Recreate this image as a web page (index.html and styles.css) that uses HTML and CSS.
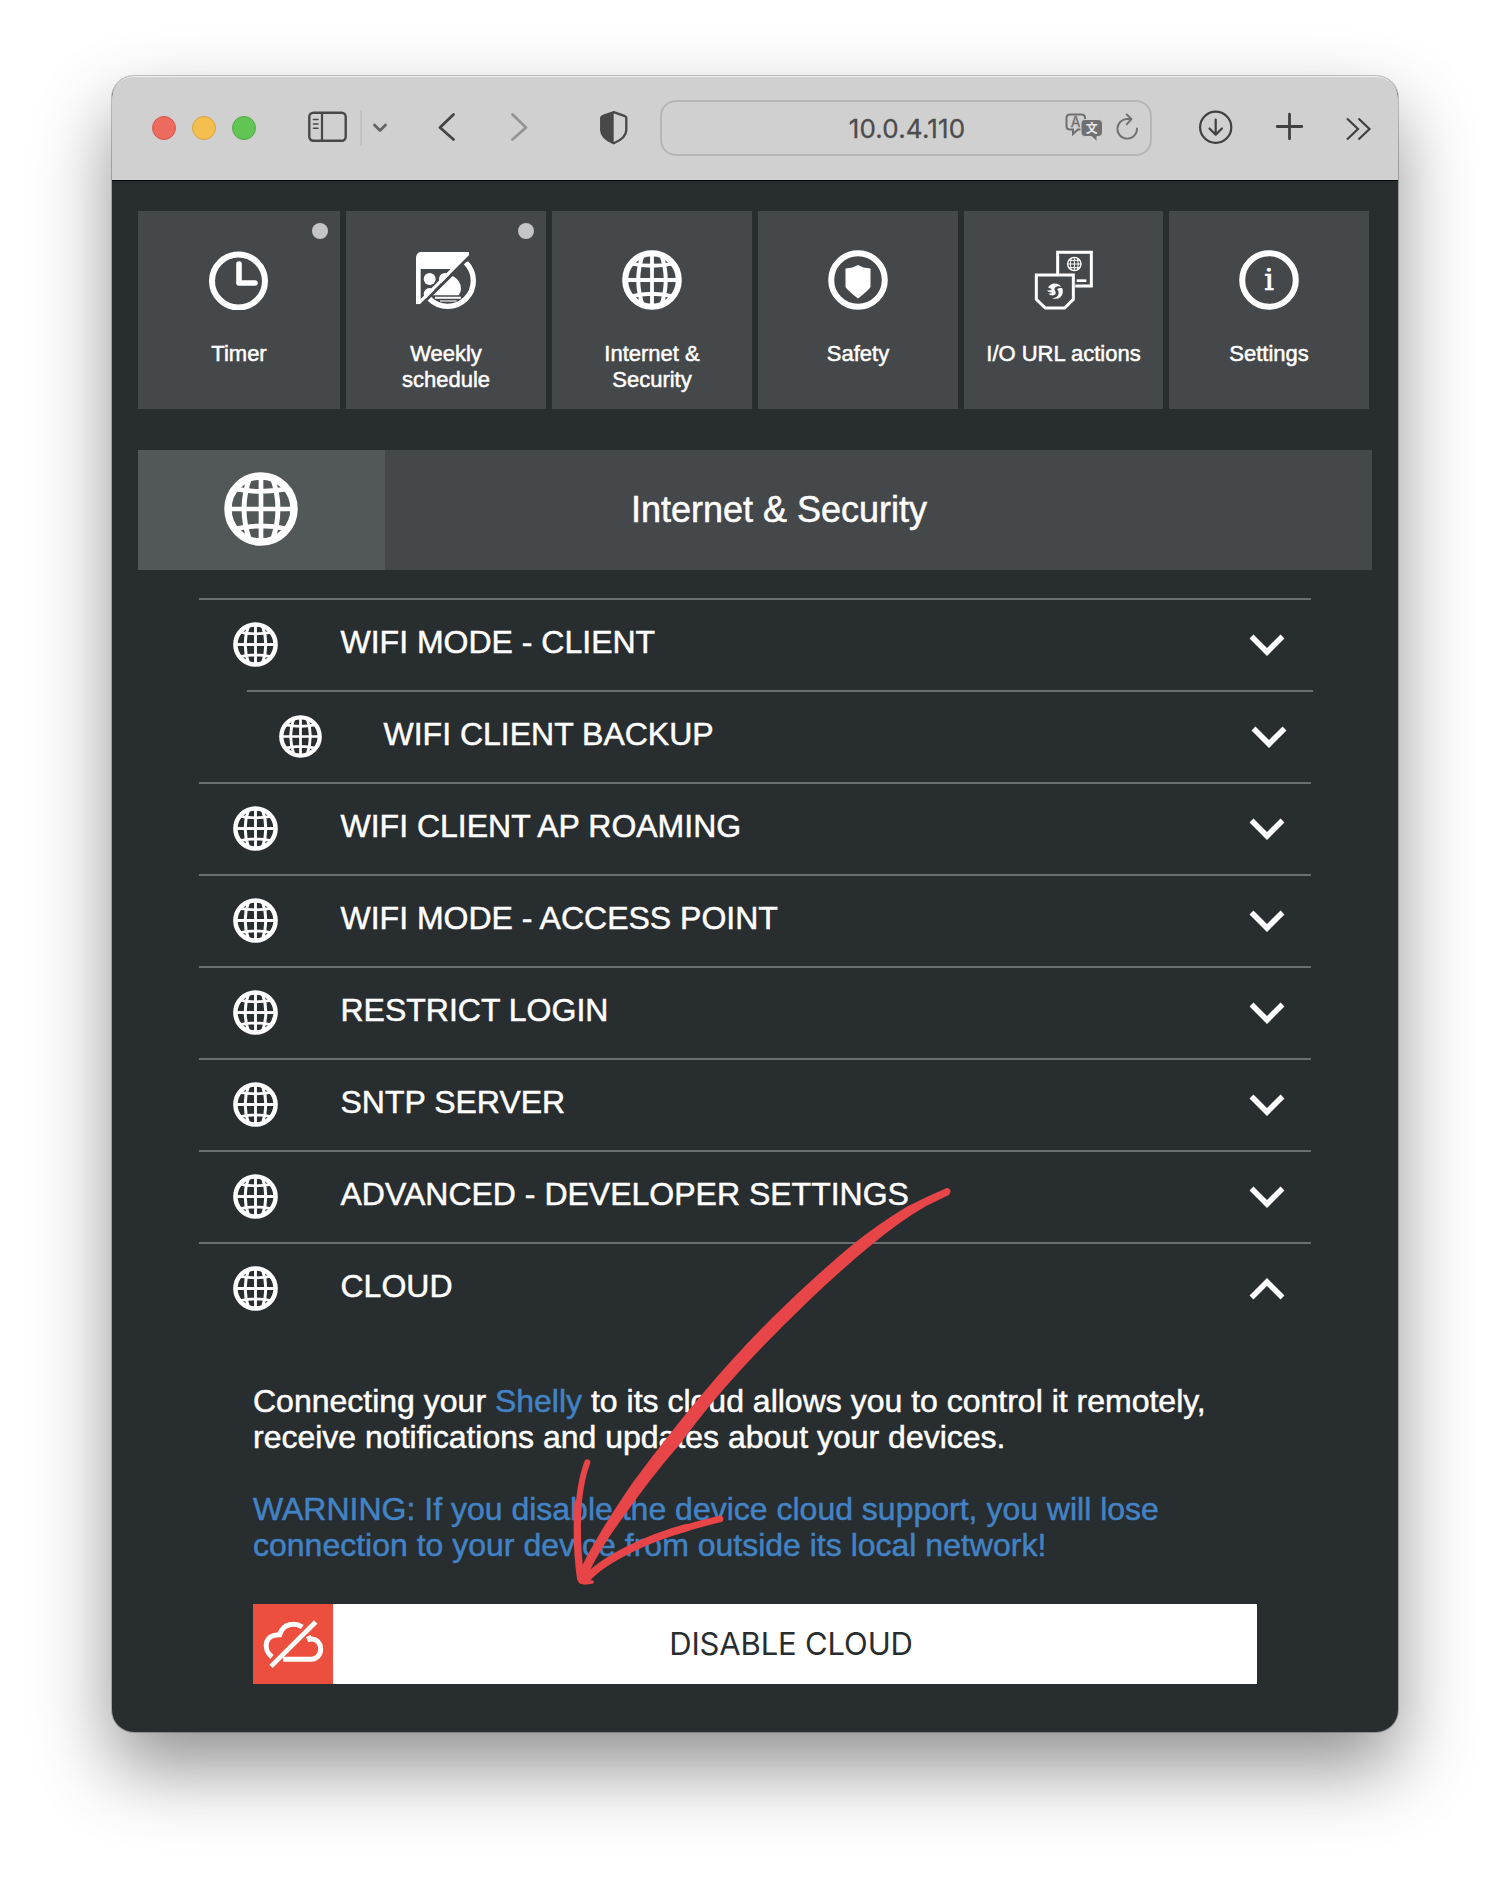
FILE: index.html
```html
<!DOCTYPE html>
<html lang="en">
<head>
<meta charset="utf-8">
<title>Internet &amp; Security</title>
<link rel="stylesheet" href="styles.css">
</head>
<body>
<svg class="defs" width="0" height="0">
  <symbol id="globe" viewBox="0 0 60 60">
    <g fill="none" stroke="#fff">
      <circle cx="30" cy="30" r="26.800" stroke-width="6"/>
      <path d="M30 3V57M3 30H57M8 13.500Q30 18 52 13.500M8 46.500Q30 41 52 46.500" stroke-width="3.800"/>
      <path d="M21 4Q11.500 30 21 56M39 4Q48.500 30 39 56" stroke-width="4"/>
    </g>
  </symbol>
  <symbol id="down" viewBox="0 0 36 22">
    <path d="M2.500 2.500L18 18L33.500 2.500" fill="none" stroke="#fff" stroke-width="5.600"/>
  </symbol>
</svg>
<main class="window">
  <header class="toolbar">
    <div class="lights"><i class="red"></i><i class="amber"></i><i class="green"></i></div>
    <svg class="ic-sidebar" width="40" height="36" fill="none" stroke="#484848">
      <rect x="1.300" y="2.800" width="36.400" height="28" rx="4" stroke-width="2.400"/>
      <path d="M14 3V31" stroke-width="2.200"/>
      <path d="M5.500 9.500H10M5.500 14H10M5.500 18.300H10" stroke-width="1.600" stroke-linecap="round"/>
    </svg>
    <span class="sep"></span>
    <svg class="ic-menu" width="16" height="36" fill="none" stroke="#636368" stroke-width="2.800" stroke-linecap="round" stroke-linejoin="round"><path d="M2.500 15L8 20.500L13.500 15"/></svg>
    <svg class="ic-back" width="18" height="36" fill="none" stroke="#454545" stroke-width="2.800" stroke-linecap="round" stroke-linejoin="round"><path d="M15.500 4.500L2 17.500L15.500 29.500"/></svg>
    <svg class="ic-next" width="18" height="36" fill="none" stroke="#949494" stroke-width="2.800" stroke-linecap="round" stroke-linejoin="round"><path d="M2.500 4.500L16 17.500L2.500 29.500"/></svg>
    <svg class="ic-shield" width="28" height="36"><path d="M13.700 2.200L25 6.200Q26.300 6.700 26.300 8V20Q26.300 28 13.700 33.200Q1.200 28 1.200 20V8Q1.200 6.700 2.500 6.200Z" fill="none" stroke="#484848" stroke-width="2.300"/><path d="M13.700 1.500L1.200 6.500V20Q1.200 28 13.700 33.500Z" fill="#484848"/></svg>
    <div class="address">
      <span class="host">10.0.4.110</span>
      <svg class="ic-translate" width="38" height="36">
        <path d="M5 4.500H16.500Q20 4.500 20 8V16.500Q20 19.500 16.500 19.500H13L8 24V19.500H5Q1.500 19.500 1.500 16V8Q1.500 4.500 5 4.500Z" fill="none" stroke="#707070" stroke-width="2"/>
        <text x="10.700" y="16.500" class="glyph-a">A</text>
        <path d="M20 9.500H33Q37.500 9.500 37.500 14V22Q37.500 26.500 33 26.500H32V31.500L26.500 26.500H20.500Q16 26.500 16 22V14Q16 9.500 20 9.500Z" fill="#707070" stroke="#d0d0d0" stroke-width="1"/>
        <text x="26.700" y="22.800" class="glyph-b">文</text>
      </svg>
      <svg class="ic-reload" width="24" height="36" fill="none" stroke="#707070" stroke-width="1.900" stroke-linecap="round" stroke-linejoin="round"><path d="M21 18.500A9.800 9.800 0 1 1 11.500 9H15.500M10.700 4.500L15.500 9L10.700 14.300"/></svg>
    </div>
    <svg class="ic-download" width="36" height="36" fill="none" stroke="#404040" stroke-width="2.200" stroke-linecap="round" stroke-linejoin="round"><circle cx="17.700" cy="17.300" r="15.600"/><path d="M17.700 9.500V24.500M11.500 18.500L17.700 24.700L23.900 18.500"/></svg>
    <svg class="ic-plus" width="30" height="36" fill="none" stroke="#404040" stroke-width="2.800" stroke-linecap="round"><path d="M14.500 4.200V28.800M2.200 16.500H26.800"/></svg>
    <svg class="ic-more" width="26" height="36" fill="none" stroke="#404040" stroke-width="2.200"><path d="M1 8.500L12 19L1 29.500M12.500 8.500L23.500 19L12.500 29.500"/></svg>
  </header>

  <div class="page">
    <nav class="tiles">
      <a class="tile first"><b class="dot"></b>
        <svg width="60" height="60" fill="none" stroke="#fff"><circle cx="29.500" cy="31" r="26.500" stroke-width="6"/><path d="M30 14V33H46" stroke-width="5.600" stroke-linecap="round" stroke-linejoin="round"/></svg>
        <span>Timer</span></a>
      <a class="tile"><b class="dot"></b>
        <svg width="60" height="60" viewBox="0 -5 180 180">
          <defs>
            <clipPath id="upper"><path d="M0 0H160V10L12 158H0Z"/></clipPath>
            <clipPath id="lower"><path d="M150 32L180 20V175H30V152Z"/></clipPath>
          </defs>
          <g clip-path="url(#upper)">
            <path fill-rule="evenodd" fill="#fff" d="M0 20Q0 0 20 0H160V10L10 160H0ZM14 52V142L104 52Z"/>
            <g fill="#fff"><circle cx="41" cy="82" r="18"/><circle cx="87" cy="82" r="18"/><circle cx="41" cy="127" r="18"/></g>
          </g>
          <g clip-path="url(#lower)">
            <circle cx="95" cy="87" r="77" fill="none" stroke="#fff" stroke-width="16"/>
            <path d="M50 131L110 73Q135 85 135 112Q135 122 128 131Z" fill="#fff"/>
            <path d="M57 138H135" stroke="#fff" stroke-width="6"/><path d="M72 148H122" stroke="#d0d2d2" stroke-width="4"/>
          </g>
        </svg>
        <span>Weekly<br>schedule</span></a>
      <a class="tile"><svg width="60" height="60"><use href="#globe"/></svg><span>Internet &amp;<br>Security</span></a>
      <a class="tile"><svg width="60" height="60"><circle cx="30" cy="30" r="26.800" fill="none" stroke="#fff" stroke-width="6"/><path d="M17.500 18.500Q25 18 30 15Q35 18 42.500 18.500V37Q41 40 30 48.500Q19 40 17.500 37Z" fill="#fff"/></svg><span>Safety</span></a>
      <a class="tile narrow"><svg width="60" height="60" viewBox="-2 -2 180 180" fill="none" stroke="#fff">
          <path d="M69 70V5H170V106H122" stroke-width="9"/>
          <path d="M5 73H116V146L90 172H32L5 146Z" stroke-width="9"/>
          <circle cx="119" cy="40" r="20" stroke-width="4"/>
          <path d="M119 20V60M98 40H140M102 29H136M102 51H136M110 22Q104 40 110 58M128 22Q134 40 128 58" stroke-width="3"/>
          <path d="M126 90H155" stroke-width="8"/>
          <path fill="#fff" stroke="none" d="M40 110Q50 96 66 99Q76 101 79 108Q64 105 60 112Q58 118 62 122Q66 132 56 134Q46 135 41 129Q50 130 53 125Q42 127 36 119Q47 121 52 115Q44 114 40 110ZM83 113Q88 130 77 140Q66 148 52 142Q66 142 71 132Q74 122 67 116Q74 110 83 113Z"/>
        </svg><span>I/O URL actions</span></a>
      <a class="tile"><svg width="60" height="60"><circle cx="30" cy="30" r="26.800" fill="none" stroke="#fff" stroke-width="6"/><text x="30" y="39.500" class="info">i</text></svg><span>Settings</span></a>
    </nav>

    <section class="title">
      <div class="title-icon"><svg width="74" height="74"><use href="#globe"/></svg></div>
      <h1>Internet &amp; Security</h1>
    </section>

    <ul class="list">
      <li><svg class="g"><use href="#globe"/></svg><span>WIFI MODE - CLIENT</span><svg class="c"><use href="#down"/></svg></li>
      <li class="sub"><svg class="g"><use href="#globe"/></svg><span>WIFI CLIENT BACKUP</span><svg class="c"><use href="#down"/></svg></li>
      <li><svg class="g"><use href="#globe"/></svg><span>WIFI CLIENT AP ROAMING</span><svg class="c"><use href="#down"/></svg></li>
      <li><svg class="g"><use href="#globe"/></svg><span>WIFI MODE - ACCESS POINT</span><svg class="c"><use href="#down"/></svg></li>
      <li><svg class="g"><use href="#globe"/></svg><span>RESTRICT LOGIN</span><svg class="c"><use href="#down"/></svg></li>
      <li><svg class="g"><use href="#globe"/></svg><span>SNTP SERVER</span><svg class="c"><use href="#down"/></svg></li>
      <li><svg class="g"><use href="#globe"/></svg><span>ADVANCED - DEVELOPER SETTINGS</span><svg class="c"><use href="#down"/></svg></li>
      <li><svg class="g"><use href="#globe"/></svg><span>CLOUD</span><svg class="c up"><use href="#down"/></svg></li>
    </ul>

    <section class="cloud">
      <p>Connecting your <a>Shelly</a> to its cloud allows you to control it remotely,<br>receive notifications and updates about your devices.</p>
      <p class="warning">WARNING: If you disable the device cloud support, you will lose<br>connection to your device from outside its local network!</p>
      <div class="button">
        <svg width="80" height="80" viewBox="0 0 240 240" fill="none" stroke="#fff" stroke-width="15">
          <path d="M57 159C28 136 34 90 80 92C90 58 126 54 148 69"/>
          <path d="M54 187L188 54" stroke-width="14"/>
          <path d="M166 96L170 106C190 102 203 118 203 135C203 154 190 166 174 166H90"/>
        </svg>
        <span>DISABLE CLOUD</span>
      </div>
    </section>
  </div>

  <svg class="arrow" viewBox="0 0 1320 1290" fill="none" stroke="#e84549" stroke-linecap="round">
    <path fill="#e84549" stroke="none" d="M1220 54Q1160 80 1100 110Q1010 165 940 222Q820 322 700 440Q590 550 480 680Q380 800 280 935Q190 1065 135 1170L113 1215L116 1238Q135 1250 145 1210Q190 1120 245 1048Q330 925 420 822Q510 700 604 598Q700 494 800 398Q900 302 1000 220Q1080 153 1160 107L1228 74Q1238 56 1220 54Z"/>
    <path d="M142 877C105 975 110 1120 120 1215" stroke-width="18"/>
    <path d="M114 1000C109 1090 114 1170 122 1225" stroke-width="22"/>
    <path d="M540 1047C400 1080 210 1140 137 1232" stroke-width="20"/>
    <path d="M440 1073C320 1105 190 1170 140 1225" stroke-width="23"/>
    <path d="M123 1236L134 1239L156 1236" stroke-width="11"/>
  </svg>
</main>
</body>
</html>
```
FILE: styles.css
```css
* { box-sizing: border-box; }
body {
  margin: 0;
  padding: 76px 112px 0;
  height: 1880px;
  overflow: hidden;
  background: #fff;
  font-family: "Liberation Sans", Arial, sans-serif;
  color: #fff;
}
svg { display: block; flex: none; }
.defs { position: absolute; }
.window {
  position: relative;
  width: 1286px;
  height: 1656px;
  border-radius: 22px;
  background: #282d2f;
  box-shadow: 0 0 0 1px rgba(0, 0, 0, .22), 0 36px 76px rgba(0, 0, 0, .43);
}

.toolbar {
  display: flex;
  align-items: center;
  height: 105px;
  padding: 0 0 1px 40px;
  border-radius: 22px 22px 0 0;
  background: #d0d0d0;
  box-shadow: inset 0 2px 0 -1px #f0f0f0, inset 0 -1px 0 #05080a;
}
.lights { display: flex; gap: 16px; }
.lights i { width: 24px; height: 24px; border-radius: 50%; border: 1px solid; }
.lights .red { background: #ed6a5e; border-color: #d5544a; }
.lights .amber { background: #f5bf4f; border-color: #d8a03c; }
.lights .green { background: #61c554; border-color: #52a743; }
.ic-sidebar { margin-left: 52px; }
.sep { width: 2px; height: 36px; margin-left: 12px; background: #c2c2c2; }
.ic-menu { margin-left: 10px; }
.ic-back { margin-left: 50px; }
.ic-next { margin-left: 54px; }
.ic-shield { margin-left: 72px; }
.address {
  display: flex;
  align-items: center;
  width: 492px;
  height: 56px;
  margin-left: 32px;
  border: 2px solid #b6b6b6;
  border-radius: 16px;
}
.host {
  width: 120px;
  margin-left: 185px;
  padding-top: 2px;
  text-align: center;
  font: 26px/36px Inter, sans-serif;
  letter-spacing: .15px;
  white-space: nowrap;
  color: #4c4c4c;
  -webkit-text-stroke: .3px currentColor;
}
.ic-translate { margin-left: 98px; }
.ic-reload { margin-left: 13px; }
.glyph-a { font: 14px Inter, sans-serif; fill: #707070; stroke: #707070; stroke-width: .3px; text-anchor: middle; }
.glyph-b { font: bold 12px "Noto Sans CJK SC", sans-serif; fill: #e6e6e6; text-anchor: middle; }
.ic-download { margin-left: 46px; }
.ic-plus { margin-left: 41px; }
.ic-more { margin-left: 41px; }

.page { padding: 30px 26px 0; -webkit-text-stroke: .5px currentColor; }
.page svg { -webkit-text-stroke: 0; }
.tiles { display: flex; gap: 6px; }
.tile {
  position: relative;
  display: flex;
  flex-direction: column;
  align-items: center;
  width: 200px;
  height: 198px;
  padding-top: 39px;
  background: #45484a;
  font-size: 22px;
  line-height: 26px;
  text-align: center;
}
.tile.first { width: 202px; }
.tile.narrow { width: 199px; }
.tile span { margin-top: 31px; white-space: nowrap; }
.dot {
  position: absolute;
  top: 12px;
  right: 12px;
  width: 16px;
  height: 16px;
  border-radius: 50%;
  background: #c5c5c7;
}
.page .info { font: 30px "DejaVu Serif", serif; fill: #fff; stroke: #fff; stroke-width: .7px; text-anchor: middle; }

.title { display: flex; height: 120px; margin-top: 41px; background: #45484a; }
.title-icon {
  display: flex;
  align-items: center;
  justify-content: center;
  width: 247px;
  padding: 0 2px 2px 0;
  background: #525857;
}
h1 {
  flex: 1;
  margin: 0;
  padding-right: 199px;
  font-size: 36px;
  font-weight: normal;
  line-height: 120px;
  text-align: center;
}

.list { margin: 28px 61px 0; padding: 0; list-style: none; }
.list li {
  display: flex;
  align-items: center;
  height: 92px;
  padding: 0 26px 0 34px;
  border-top: 2px solid #6a6e70;
  font-size: 32px;
}
.list span { flex: 1; margin-left: 62.500px; padding-bottom: 5px; white-space: nowrap; }
.g { width: 45px; height: 45px; margin-bottom: 2px; }
.c { width: 36px; height: 22px; margin-bottom: 1px; }
.up { margin: 0; transform: scaleY(-1); }
.list .sub { margin: 0 -2px 0 48px; padding-left: 32px; }
.sub .g { width: 43px; height: 43px; }
.list .sub span { margin-left: 61.500px; }

.cloud { padding: 49px 115px 0; font-size: 32px; line-height: 36px; }
.cloud p { margin: 0 0 36px; white-space: nowrap; }
.cloud a, .cloud .warning { color: #4283c5; }
.cloud .warning { margin-bottom: 41px; }
.button { display: flex; height: 80px; background: #fff; color: #282d2f; -webkit-text-stroke: 0; }
.button svg { background: #ec4f3e; }
.button span {
  flex: 1;
  padding-right: 8px;
  font-family: Inter, sans-serif;
  font-size: 31px;
  letter-spacing: -.15px;
  line-height: 79px;
  text-align: center;
}

.arrow { position: absolute; left: 428px; top: 1094px; width: 440px; height: 430px; }
```
